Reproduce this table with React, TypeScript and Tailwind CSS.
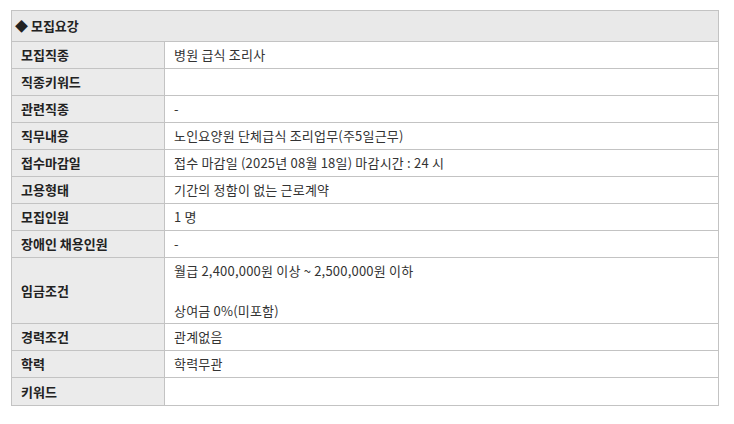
const rows: { label: string; value: string[]; tall?: boolean }[] = [
  { label: "모집직종", value: ["병원 급식 조리사"] },
  { label: "직종키워드", value: [""] },
  { label: "관련직종", value: ["-"] },
  { label: "직무내용", value: ["노인요양원 단체급식 조리업무(주5일근무)"] },
  { label: "접수마감일", value: ["접수 마감일 (2025년 08월 18일) 마감시간 : 24 시"] },
  { label: "고용형태", value: ["기간의 정함이 없는 근로계약"] },
  { label: "모집인원", value: ["1 명"] },
  { label: "장애인 채용인원", value: ["-"] },
  { label: "임금조건", value: ["월급 2,400,000원 이상 ~ 2,500,000원 이하", "", "상여금 0%(미포함)"], tall: true },
  { label: "경력조건", value: ["관계없음"] },
  { label: "학력", value: ["학력무관"] },
  { label: "키워드", value: [""] },
];

export default function App() {
  return (
    <div
      className="w-[734px] h-[424px] bg-white pt-[10px] pl-[11px] text-[13px] text-[#333]"
      style={{ fontFamily: '"Noto Sans CJK KR", "Noto Sans", sans-serif' }}
    >
      <div className="w-[708px] border border-[#c3c3c3]">
        {/* 헤더 */}
        <div className="h-[31px] bg-[#e9e9e9] border-b border-[#c3c3c3] flex items-center pl-[3px] font-bold text-[#222]">
          ◆ 모집요강
        </div>
        {rows.map((row, i) => (
          <div
            key={row.label}
            className={`flex ${i < rows.length - 1 ? "border-b border-[#c3c3c3]" : ""} ${row.tall ? "h-[66px]" : "h-[27px]"}`}
          >
            <div className="w-[153px] shrink-0 bg-[#ebebeb] border-r border-[#c3c3c3] flex items-center pl-[9px] font-bold text-[#222]">
              {row.label}
            </div>
            <div className="flex-1 flex flex-col justify-center pl-[9px] leading-[20px] tracking-[0.2px]">
              {row.value.map((v, j) => (
                <div key={j} className="h-[20px]">
                  {v}
                </div>
              ))}
            </div>
          </div>
        ))}
      </div>
    </div>
  );
}
